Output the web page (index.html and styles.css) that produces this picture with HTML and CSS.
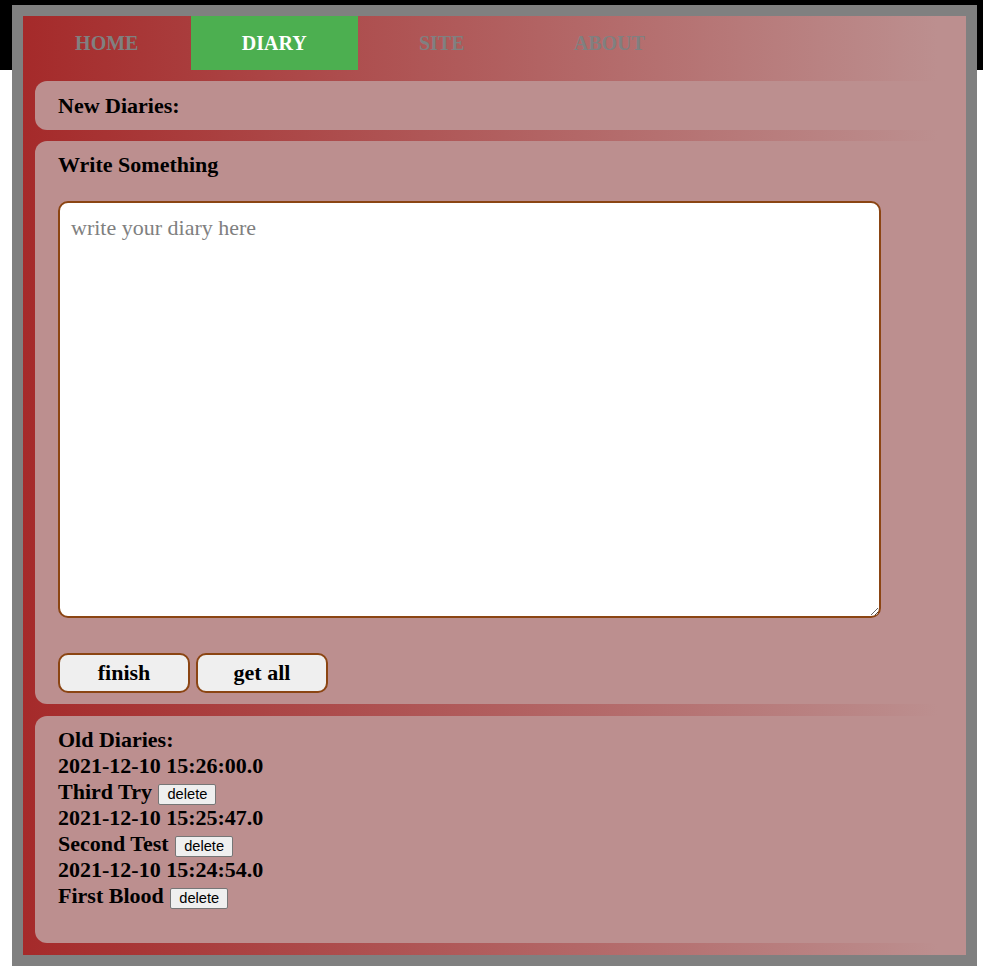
FILE: index.html
```html
<!DOCTYPE html>
<html>
<head>
<meta charset="utf-8">
<title>Diary</title>
<link rel="stylesheet" href="styles.css">
</head>
<body>
<div class="frame">
  <nav class="nav">
    <a class="tab">Home</a>
    <a class="tab active">Diary</a>
    <a class="tab">Site</a>
    <a class="tab">About</a>
  </nav>
  <section class="card card-new">New Diaries:</section>
  <section class="card card-write">
    <div class="title">Write Something</div>
    <textarea class="editor" placeholder="write your diary here"></textarea>
    <div class="actions">
      <button class="action">finish</button>
      <button class="action">get all</button>
    </div>
  </section>
  <section class="card card-old">
    <div class="line">Old Diaries:</div>
    <div class="line">2021-12-10 15:26:00.0</div>
    <div class="line">Third Try <button class="del">delete</button></div>
    <div class="line">2021-12-10 15:25:47.0</div>
    <div class="line">Second Test <button class="del">delete</button></div>
    <div class="line">2021-12-10 15:24:54.0</div>
    <div class="line">First Blood <button class="del">delete</button></div>
  </section>
</div>
</body>
</html>
```
FILE: styles.css
```css
html, body {
  margin: 0;
  padding: 0;
}
body {
  background: linear-gradient(#000, #000) 0 0 / 100% 70px no-repeat, #fff;
  font-family: "Liberation Serif", "Times New Roman", serif;
  height: 972px;
  overflow: hidden;
}
.frame {
  margin: 5px 0 0 12px;
  width: 943px;
  height: 939px;
  border: 11px solid #808080;
  background: linear-gradient(to right, #a52a2a 0%, #bc8f8f 97%);
  display: flex;
  flex-direction: column;
}
.nav {
  display: flex;
  height: 54px;
}
.tab {
  width: 167.5px;
  display: flex;
  align-items: center;
  justify-content: center;
  font-weight: bold;
  font-size: 20px;
  text-transform: uppercase;
  color: #808080;
}
.tab.active {
  background: #4caf50;
  color: #fff;
}
.card {
  margin-left: 12px;
  background: #bc8f8f;
  border-radius: 12px 0 0 12px;
  padding: 0 23px;
  font-size: 22px;
  font-weight: bold;
  color: #000;
}
.card-new {
  margin-top: 11px;
  height: 49px;
  line-height: 49px;
}
.card-write {
  margin-top: 11px;
  height: 563px;
  box-sizing: border-box;
  padding-top: 11px;
  padding-bottom: 11px;
}
.title {
  line-height: 25px;
}
.editor {
  display: block;
  margin-top: 24px;
  width: 823px;
  height: 417px;
  box-sizing: border-box;
  border: 2px solid #8b4513;
  border-radius: 10px;
  padding: 12px 11px 9px;
  font-family: "Liberation Serif", "Times New Roman", serif;
  font-size: 22px;
  background: #fff;
  outline: none;
}
.editor::placeholder {
  color: #808080;
}
.actions {
  display: flex;
  gap: 6px;
  margin-top: 35px;
}
.action {
  width: 132px;
  height: 40px;
  border: 2px solid #8b4513;
  border-radius: 10px;
  background: #efefef;
  font-family: "Liberation Serif", "Times New Roman", serif;
  font-size: 22px;
  font-weight: bold;
  color: #000;
  padding: 0;
}
.card-old {
  margin-top: 12px;
  height: 227px;
  box-sizing: border-box;
  padding-top: 11px;
}
.line {
  line-height: 26px;
}
.del {
  font-family: "Liberation Sans", Arial, sans-serif;
  font-size: 14.67px;
  line-height: 17px;
  font-weight: normal;
  margin-left: 1px;
  padding: 1px 8px;
  background: #efefef;
  border: 1px solid #767676;
  border-radius: 2px;
  color: #000;
  vertical-align: 0;
}
```
